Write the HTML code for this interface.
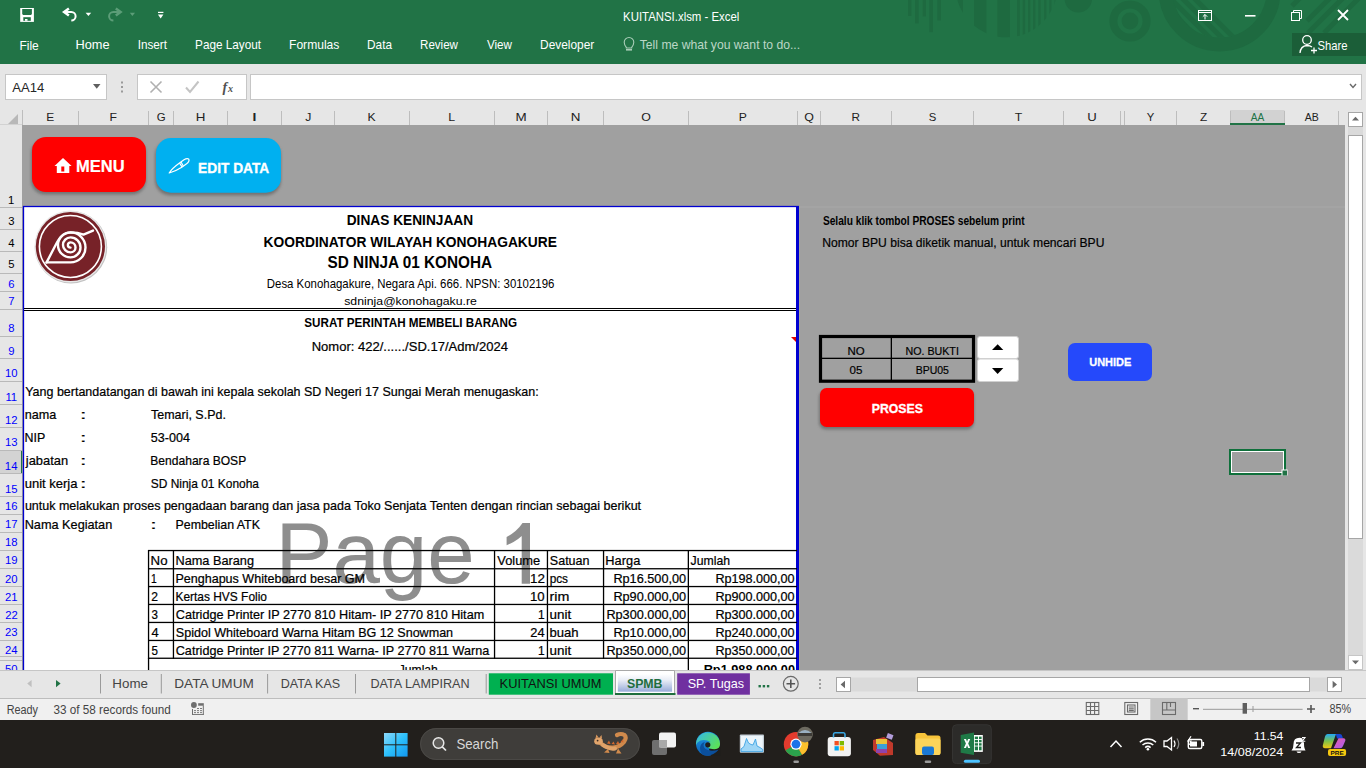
<!DOCTYPE html>
<html><head><meta charset="utf-8"><title>KUITANSI.xlsm - Excel</title>
<style>
html,body{margin:0;padding:0;width:1366px;height:768px;overflow:hidden;background:#e6e6e6;}
svg{display:block;font-family:"Liberation Sans",sans-serif;}
</style></head><body>
<svg width="1366" height="768" viewBox="0 0 1366 768">
<rect x="0" y="0" width="1366" height="64" fill="#217346"/><defs>
<clipPath id="semi"><circle cx="1006.5" cy="-13.7" r="51"/></clipPath>
<clipPath id="ringin"><circle cx="1219.6" cy="-10" r="47.5"/></clipPath>
<clipPath id="tb"><rect x="0" y="0" width="1366" height="64"/></clipPath>
</defs>
<g fill="#1e6a40" clip-path="url(#tb)">
<rect x="908" y="0" width="3.4" height="16"/><rect x="915" y="0" width="3.7" height="23.4"/><rect x="922.7" y="0" width="3.3" height="16.4"/>
<rect x="929.3" y="0" width="3.7" height="32.2"/><rect x="937.3" y="0" width="3.7" height="20.5"/>
<g clip-path="url(#semi)">
<path d="M955 0 L963 0 L963 15 Z"/>
<rect x="974" y="0" width="12.4" height="60"/><rect x="997.4" y="0" width="12.6" height="60"/>
<rect x="1017" y="0" width="2.8" height="60"/><rect x="1022.7" y="0" width="2.5" height="60"/><rect x="1028" y="0" width="2.3" height="60"/>
<rect x="1033" y="0" width="2.4" height="60"/><rect x="1038.3" y="0" width="2.3" height="60"/><rect x="1044.2" y="0" width="2.2" height="60"/>
<rect x="1049.3" y="0" width="2.2" height="60"/><rect x="1054.5" y="0" width="2.2" height="60"/>
</g>
<circle cx="1078.3" cy="-1.3" r="13.7"/>
<circle cx="1130" cy="21" r="8.4"/>
</g>
<g clip-path="url(#tb)">
<circle cx="1130" cy="21" r="16.6" fill="none" stroke="#1e6a40" stroke-width="8"/>
<circle cx="1219.6" cy="-9.6" r="54" fill="none" stroke="#1e6a40" stroke-width="14"/>
<g clip-path="url(#ringin)" stroke="#1e6a40" stroke-width="5">
<line x1="1150" y1="-10" x2="1215" y2="55"/><line x1="1162" y1="-10" x2="1227" y2="55"/>
<line x1="1174" y1="-10" x2="1239" y2="55"/><line x1="1186" y1="-10" x2="1251" y2="55"/>
</g>
<g stroke="#1e6a40" stroke-width="5">
<line x1="1292" y1="6" x2="1300" y2="-2"/><line x1="1307" y1="21" x2="1330" y2="-2"/>
<line x1="1308" y1="33" x2="1343" y2="-2"/><line x1="1324" y1="33" x2="1359" y2="-2"/>
</g>
</g>
<rect x="20.2" y="8" width="13.7" height="13.9" fill="#fff"/>
<path d="M22.2 9.1 H31.9 V14 L31 14.9 H23.1 L22.2 14 Z" fill="#217346"/>
<rect x="23.3" y="17.2" width="7.5" height="3.6" fill="#217346"/>
<rect x="25" y="19" width="2.5" height="1.8" fill="#fff"/>
<path d="M68.9 8.4 L64.1 11.95 L68.9 15.5" fill="none" stroke="#fff" stroke-width="2.5" stroke-linejoin="miter"/>
<path d="M65 11.95 H71.3 A4.3 4.25 0 0 1 71.3 20.45" fill="none" stroke="#fff" stroke-width="2"/>
<path d="M85.6 12.8 H91.2 L88.4 16 Z" fill="#fff"/>
<path d="M115.8 8.4 L120.6 11.95 L115.8 15.5" fill="none" stroke="#5c9d78" stroke-width="2.5"/>
<path d="M119.7 11.95 H113.4 A4.3 4.25 0 0 0 113.4 20.45" fill="none" stroke="#5c9d78" stroke-width="2"/>
<path d="M129.8 12.8 H135 L132.4 16 Z" fill="#5c9d78"/>
<rect x="158" y="11.8" width="5.4" height="1.2" fill="#fff"/>
<path d="M157.9 14.5 H163.4 L160.65 18.4 Z" fill="#fff"/>
<text x="623.09" y="21.00" font-size="13.00" fill="#fff" textLength="116.25" lengthAdjust="spacingAndGlyphs">KUITANSI.xlsm - Excel</text>
<g fill="none" stroke="#fff" stroke-width="1">
<rect x="1198.5" y="10.5" width="13" height="10"/>
<line x1="1198.5" y1="12.5" x2="1211.5" y2="12.5"/>
<path d="M1205 19.5 V14.5 M1202.8 16.7 L1205 14.5 L1207.2 16.7"/>
<rect x="1291.5" y="12.5" width="8" height="8"/>
<path d="M1293.5 12.5 V10.5 H1301.5 V18.5 H1299.5"/>
</g>
<rect x="1245" y="15" width="10.5" height="1.6" fill="#fff"/>
<path d="M1338 10 L1348 20 M1348 10 L1338 20" stroke="#fff" stroke-width="1.8"/>
<rect x="1292" y="33" width="74" height="23" fill="#1b5e38"/><g fill="none" stroke="#fff" stroke-width="1.3">
<circle cx="1307" cy="40" r="4.3"/>
<path d="M1300 53 Q1300.5 46 1307 45.5 Q1310 45.5 1312 47"/>
<path d="M1311 50.5 H1317 M1314 47.5 V53.5"/>
</g><text x="1317.49" y="49.50" font-size="13.00" fill="#fff" textLength="30.05" lengthAdjust="spacingAndGlyphs">Share</text>
<text x="19.44" y="50.20" font-size="13.20" fill="#fff" textLength="19.32" lengthAdjust="spacingAndGlyphs">File</text>
<text x="75.48" y="49.00" font-size="13.20" fill="#fff" textLength="34.13" lengthAdjust="spacingAndGlyphs">Home</text>
<text x="137.64" y="49.00" font-size="13.20" fill="#fff" textLength="29.33" lengthAdjust="spacingAndGlyphs">Insert</text>
<text x="195.06" y="49.00" font-size="13.20" fill="#fff" textLength="66.01" lengthAdjust="spacingAndGlyphs">Page Layout</text>
<text x="289.03" y="49.00" font-size="13.20" fill="#fff" textLength="50.36" lengthAdjust="spacingAndGlyphs">Formulas</text>
<text x="367.05" y="49.00" font-size="13.20" fill="#fff" textLength="24.97" lengthAdjust="spacingAndGlyphs">Data</text>
<text x="420.07" y="49.00" font-size="13.20" fill="#fff" textLength="37.91" lengthAdjust="spacingAndGlyphs">Review</text>
<text x="486.94" y="49.00" font-size="13.20" fill="#fff" textLength="25.05" lengthAdjust="spacingAndGlyphs">View</text>
<text x="540.05" y="49.00" font-size="13.20" fill="#fff" textLength="54.17" lengthAdjust="spacingAndGlyphs">Developer</text>
<g fill="none" stroke="#a9cdb8" stroke-width="1.1">
<path d="M626.3 47.3 Q624.2 44.8 624.2 42.3 A4.8 4.8 0 0 1 633.8 42.3 Q633.8 44.8 631.7 47.3 V48 H626.3 Z"/>
<line x1="626" y1="49.8" x2="632" y2="49.8" stroke-width="1.6"/>
</g><text x="639.76" y="49.00" font-size="13.20" fill="#bcd7c6" textLength="160.38" lengthAdjust="spacingAndGlyphs">Tell me what you want to do...</text>
<rect x="0" y="64" width="1366" height="46" fill="#e6e6e6"/><rect x="5.5" y="74.5" width="101" height="25" fill="#fff" stroke="#c6c6c6"/><text x="12.30" y="92.30" font-size="13.50" fill="#262626" textLength="32.01" lengthAdjust="spacingAndGlyphs">AA14</text>
<path d="M93 84 H100.5 L96.75 88.7 Z" fill="#5f5f5f"/><g fill="#9a9a9a"><rect x="121" y="81.5" width="2" height="2"/><rect x="121" y="86" width="2" height="2"/><rect x="121" y="90.5" width="2" height="2"/></g><rect x="137.5" y="74.5" width="109" height="25" fill="#fff" stroke="#c6c6c6"/><path d="M150.5 81.5 L161.5 92.5 M161.5 81.5 L150.5 92.5" stroke="#b0b0b0" stroke-width="1.6"/><path d="M186 87.5 L190 92 L198.5 81.5" fill="none" stroke="#c4c4c4" stroke-width="2"/><text x="222.5" y="92" font-family="Liberation Serif" font-style="italic" font-weight="bold" font-size="14" fill="#505050">f</text><text x="228" y="92" font-family="Liberation Serif" font-style="italic" font-weight="bold" font-size="10" fill="#505050">x</text><rect x="250.5" y="74.5" width="1111" height="25" fill="#fff" stroke="#c6c6c6"/><path d="M1350 84 L1353 87.5 L1356 84" fill="none" stroke="#6a6a6a" stroke-width="1.4"/><rect x="0" y="110" width="1366" height="15.5" fill="#e6e6e6"/><path d="M8 124 L18 124 L18 114 Z" fill="#b8b8b8"/><rect x="1230" y="110" width="54.5" height="15" fill="#d2d2d2"/><rect x="22" y="110" width="1" height="15" fill="#bdbdbd"/><rect x="78" y="111" width="1" height="14" fill="#bdbdbd"/><rect x="148" y="111" width="1" height="14" fill="#bdbdbd"/><rect x="173" y="111" width="1" height="14" fill="#bdbdbd"/><rect x="227" y="111" width="1" height="14" fill="#bdbdbd"/><rect x="281" y="111" width="1" height="14" fill="#bdbdbd"/><rect x="334" y="111" width="1" height="14" fill="#bdbdbd"/><rect x="409" y="111" width="1" height="14" fill="#bdbdbd"/><rect x="494" y="111" width="1" height="14" fill="#bdbdbd"/><rect x="547" y="111" width="1" height="14" fill="#bdbdbd"/><rect x="603" y="111" width="1" height="14" fill="#bdbdbd"/><rect x="688" y="111" width="1" height="14" fill="#bdbdbd"/><rect x="797" y="111" width="1" height="14" fill="#bdbdbd"/><rect x="820" y="111" width="1" height="14" fill="#bdbdbd"/><rect x="891" y="111" width="1" height="14" fill="#bdbdbd"/><rect x="973" y="111" width="1" height="14" fill="#bdbdbd"/><rect x="1063" y="111" width="1" height="14" fill="#bdbdbd"/><rect x="1120" y="111" width="1" height="14" fill="#bdbdbd"/><rect x="1124" y="111" width="1" height="14" fill="#bdbdbd"/><rect x="1176" y="111" width="1" height="14" fill="#bdbdbd"/><rect x="1230" y="111" width="1" height="14" fill="#bdbdbd"/><rect x="1284" y="111" width="1" height="14" fill="#bdbdbd"/><rect x="1338" y="111" width="1" height="14" fill="#bdbdbd"/><rect x="0" y="124.5" width="23" height="1" fill="#bdbdbd"/><rect x="1230" y="123" width="55" height="2" fill="#217346"/><text x="46.30" y="121.00" font-size="11.50" fill="#222" textLength="7.96" lengthAdjust="spacingAndGlyphs">E</text>
<text x="109.52" y="121.00" font-size="11.50" fill="#222" textLength="7.48" lengthAdjust="spacingAndGlyphs">F</text>
<text x="156.68" y="121.00" font-size="11.50" fill="#222" textLength="8.91" lengthAdjust="spacingAndGlyphs">G</text>
<text x="195.68" y="121.00" font-size="11.50" fill="#222" textLength="9.67" lengthAdjust="spacingAndGlyphs">H</text>
<text x="251.61" y="121.00" font-size="11.50" fill="#222" textLength="5.85" lengthAdjust="spacingAndGlyphs">I</text>
<text x="305.32" y="121.00" font-size="11.50" fill="#222" textLength="6.10" lengthAdjust="spacingAndGlyphs">J</text>
<text x="367.53" y="121.00" font-size="11.50" fill="#222" textLength="8.12" lengthAdjust="spacingAndGlyphs">K</text>
<text x="448.26" y="121.00" font-size="11.50" fill="#222" textLength="6.87" lengthAdjust="spacingAndGlyphs">L</text>
<text x="515.43" y="121.00" font-size="11.50" fill="#222" textLength="11.19" lengthAdjust="spacingAndGlyphs">M</text>
<text x="570.68" y="121.00" font-size="11.50" fill="#222" textLength="9.67" lengthAdjust="spacingAndGlyphs">N</text>
<text x="641.19" y="121.00" font-size="11.50" fill="#222" textLength="9.65" lengthAdjust="spacingAndGlyphs">O</text>
<text x="738.78" y="121.00" font-size="11.50" fill="#222" textLength="8.10" lengthAdjust="spacingAndGlyphs">P</text>
<text x="804.19" y="121.00" font-size="11.50" fill="#222" textLength="9.65" lengthAdjust="spacingAndGlyphs">Q</text>
<text x="851.56" y="121.00" font-size="11.50" fill="#222" textLength="8.50" lengthAdjust="spacingAndGlyphs">R</text>
<text x="928.74" y="121.00" font-size="11.50" fill="#222" textLength="7.54" lengthAdjust="spacingAndGlyphs">S</text>
<text x="1014.75" y="121.00" font-size="11.50" fill="#222" textLength="7.50" lengthAdjust="spacingAndGlyphs">T</text>
<text x="1087.26" y="121.00" font-size="11.50" fill="#222" textLength="9.50" lengthAdjust="spacingAndGlyphs">U</text>
<text x="1146.72" y="121.00" font-size="11.50" fill="#222" textLength="7.53" lengthAdjust="spacingAndGlyphs">Y</text>
<text x="1199.90" y="121.00" font-size="11.50" fill="#222" textLength="7.22" lengthAdjust="spacingAndGlyphs">Z</text>
<text x="1250.75" y="121.00" font-size="11.50" fill="#217346" textLength="13.54" lengthAdjust="spacingAndGlyphs">AA</text>
<text x="1304.75" y="121.00" font-size="11.50" fill="#222" textLength="14.07" lengthAdjust="spacingAndGlyphs">AB</text>
<rect x="0" y="125" width="22" height="545" fill="#e6e6e6"/><rect x="22" y="125" width="1323" height="545" fill="#a0a0a0"/><rect x="1345" y="110" width="21" height="560" fill="#e6e6e6"/><rect x="0" y="451" width="21" height="22" fill="#d3d3d3"/><rect x="21" y="451" width="1.6" height="22" fill="#217346"/><rect x="0" y="207" width="22" height="1" fill="#b9b9b9"/><rect x="0" y="229" width="22" height="1" fill="#b9b9b9"/><rect x="0" y="251" width="22" height="1" fill="#b9b9b9"/><rect x="0" y="273" width="22" height="1" fill="#b9b9b9"/><rect x="0" y="291" width="22" height="1" fill="#b9b9b9"/><rect x="0" y="309" width="22" height="1" fill="#b9b9b9"/><rect x="0" y="336" width="22" height="1" fill="#b9b9b9"/><rect x="0" y="358" width="22" height="1" fill="#b9b9b9"/><rect x="0" y="381" width="22" height="1" fill="#b9b9b9"/><rect x="0" y="404" width="22" height="1" fill="#b9b9b9"/><rect x="0" y="427" width="22" height="1" fill="#b9b9b9"/><rect x="0" y="450" width="22" height="1" fill="#b9b9b9"/><rect x="0" y="473" width="22" height="1" fill="#b9b9b9"/><rect x="0" y="496" width="22" height="1" fill="#b9b9b9"/><rect x="0" y="514" width="22" height="1" fill="#b9b9b9"/><rect x="0" y="532" width="22" height="1" fill="#b9b9b9"/><rect x="0" y="550" width="22" height="1" fill="#b9b9b9"/><rect x="0" y="568" width="22" height="1" fill="#b9b9b9"/><rect x="0" y="586" width="22" height="1" fill="#b9b9b9"/><rect x="0" y="604" width="22" height="1" fill="#b9b9b9"/><rect x="0" y="622" width="22" height="1" fill="#b9b9b9"/><rect x="0" y="640" width="22" height="1" fill="#b9b9b9"/><rect x="0" y="656" width="22" height="1" fill="#b9b9b9"/><rect x="0" y="676" width="22" height="1" fill="#b9b9b9"/><rect x="0" y="660" width="22" height="1" fill="#b9b9b9"/><rect x="22" y="125" width="1" height="545" fill="#a0a0a0"/><text x="8.09" y="203.50" font-size="11.30" fill="#000" textLength="6.28" lengthAdjust="spacingAndGlyphs">1</text>
<text x="8.26" y="225.00" font-size="11.30" fill="#000" textLength="6.28" lengthAdjust="spacingAndGlyphs">3</text>
<text x="8.32" y="246.80" font-size="11.30" fill="#000" textLength="6.28" lengthAdjust="spacingAndGlyphs">4</text>
<text x="8.26" y="268.20" font-size="11.30" fill="#000" textLength="6.28" lengthAdjust="spacingAndGlyphs">5</text>
<text x="8.21" y="288.10" font-size="11.30" fill="#0000ff" textLength="6.28" lengthAdjust="spacingAndGlyphs">6</text>
<text x="8.26" y="305.00" font-size="11.30" fill="#0000ff" textLength="6.28" lengthAdjust="spacingAndGlyphs">7</text>
<text x="8.24" y="331.60" font-size="11.30" fill="#0000ff" textLength="6.28" lengthAdjust="spacingAndGlyphs">8</text>
<text x="8.26" y="354.70" font-size="11.30" fill="#0000ff" textLength="6.28" lengthAdjust="spacingAndGlyphs">9</text>
<text x="4.90" y="376.60" font-size="11.30" fill="#0000ff" textLength="12.57" lengthAdjust="spacingAndGlyphs">10</text>
<text x="5.38" y="400.80" font-size="11.30" fill="#0000ff" textLength="11.73" lengthAdjust="spacingAndGlyphs">11</text>
<text x="4.99" y="423.50" font-size="11.30" fill="#0000ff" textLength="12.57" lengthAdjust="spacingAndGlyphs">12</text>
<text x="4.93" y="446.40" font-size="11.30" fill="#0000ff" textLength="12.57" lengthAdjust="spacingAndGlyphs">13</text>
<text x="4.87" y="469.90" font-size="11.30" fill="#0000ff" textLength="12.57" lengthAdjust="spacingAndGlyphs">14</text>
<text x="4.93" y="492.80" font-size="11.30" fill="#0000ff" textLength="12.57" lengthAdjust="spacingAndGlyphs">15</text>
<text x="4.93" y="510.40" font-size="11.30" fill="#0000ff" textLength="12.57" lengthAdjust="spacingAndGlyphs">16</text>
<text x="4.99" y="528.30" font-size="11.30" fill="#0000ff" textLength="12.57" lengthAdjust="spacingAndGlyphs">17</text>
<text x="4.93" y="546.20" font-size="11.30" fill="#0000ff" textLength="12.57" lengthAdjust="spacingAndGlyphs">18</text>
<text x="4.96" y="563.90" font-size="11.30" fill="#0000ff" textLength="12.57" lengthAdjust="spacingAndGlyphs">19</text>
<text x="5.04" y="582.90" font-size="11.30" fill="#0000ff" textLength="12.57" lengthAdjust="spacingAndGlyphs">20</text>
<text x="5.10" y="600.60" font-size="11.30" fill="#0000ff" textLength="12.57" lengthAdjust="spacingAndGlyphs">21</text>
<text x="5.13" y="618.50" font-size="11.30" fill="#0000ff" textLength="12.57" lengthAdjust="spacingAndGlyphs">22</text>
<text x="5.07" y="636.30" font-size="11.30" fill="#0000ff" textLength="12.57" lengthAdjust="spacingAndGlyphs">23</text>
<text x="5.02" y="654.20" font-size="11.30" fill="#0000ff" textLength="12.57" lengthAdjust="spacingAndGlyphs">24</text>
<text x="5.10" y="672.50" font-size="11.30" fill="#0000ff" textLength="12.57" lengthAdjust="spacingAndGlyphs">50</text>
<rect x="797" y="206.5" width="548" height="1" fill="#a8a8a8"/><rect x="23" y="207" width="774" height="463" fill="#fff"/><text x="275.47" y="582.60" font-size="86.30" fill="#8e8e8e" textLength="199.31" lengthAdjust="spacingAndGlyphs">Page</text>
<path d="M530 523 V583.7 H521.7 V536 Q518 539.5 513.5 542 Q509.5 544 506.6 545.2 V537 Q511.5 534.5 515.5 531 Q520 527 522.5 523 Z" fill="#8e8e8e"/><rect x="23" y="205.85" width="776" height="1.3" fill="#0000d0"/><rect x="22.85" y="206" width="1.3" height="464" fill="#0000d0"/><rect x="796" y="206" width="3" height="464" fill="#0000d0"/><rect x="799" y="206" width="1" height="464" fill="#a9a89c"/><rect x="24" y="308" width="772" height="1" fill="#000"/><rect x="24" y="310" width="772" height="1" fill="#000"/><g>
<circle cx="71" cy="247.2" r="36.2" fill="#9a9a9a" opacity="0.6"/>
<circle cx="70.4" cy="246.5" r="35.9" fill="#e8e8e8"/>
<circle cx="70.4" cy="246.5" r="34.6" fill="#772228"/>
<circle cx="70.4" cy="246.5" r="31" fill="none" stroke="#fff" stroke-width="1.6"/>
<g fill="none" stroke="#fff" stroke-width="2.4" stroke-linejoin="round" stroke-linecap="round">
<path d="M46.6 262.4 L70.5 262.4 A15 15 0 0 0 70.5 232.4 A12.5 12.5 0 0 0 70.5 257.4 A10 10 0 0 0 70.5 237.4 A7.5 7.5 0 0 0 70.5 252.4 A5 5 0 0 0 70.5 242.4 A2.6 2.6 0 0 0 70.5 247.6"/>
<path d="M46.6 262.4 Q53 250 57.5 241.5 Q62.5 232.8 70.5 232.4 Q78 232.4 83.5 234.6 L93 230.6"/>
</g>
</g><text x="346.71" y="225.00" font-size="14.30" font-weight="bold" fill="#000" textLength="126.43" lengthAdjust="spacingAndGlyphs">DINAS KENINJAAN</text>
<text x="263.60" y="246.90" font-size="14.60" font-weight="bold" fill="#000" textLength="293.33" lengthAdjust="spacingAndGlyphs">KOORDINATOR WILAYAH KONOHAGAKURE</text>
<text x="327.54" y="267.90" font-size="16.30" font-weight="bold" fill="#000" textLength="164.59" lengthAdjust="spacingAndGlyphs">SD NINJA 01 KONOHA</text>
<text x="266.79" y="288.30" font-size="12.20" fill="#000" textLength="287.57" lengthAdjust="spacingAndGlyphs">Desa Konohagakure, Negara Api. 666. NPSN: 30102196</text>
<text x="344.23" y="304.70" font-size="11.50" fill="#000" textLength="132.63" lengthAdjust="spacingAndGlyphs">sdninja@konohagaku.re</text>
<text x="304.25" y="327.20" font-size="13.50" font-weight="bold" fill="#000" textLength="212.76" lengthAdjust="spacingAndGlyphs">SURAT PERINTAH MEMBELI BARANG</text>
<text x="311.66" y="350.90" font-size="13.50" fill="#000" textLength="196.28" lengthAdjust="spacingAndGlyphs" stroke="#000" stroke-width="0.22">Nomor: 422/....../SD.17/Adm/2024</text>
<path d="M791 337 L796 337 L796 342 Z" fill="#e00000"/><text x="25.19" y="395.70" font-size="12.80" fill="#000" textLength="513.45" lengthAdjust="spacingAndGlyphs" stroke="#000" stroke-width="0.22">Yang bertandatangan di bawah ini kepala sekolah SD Negeri 17 Sungai Merah menugaskan:</text>
<text x="24.68" y="419.00" font-size="12.80" fill="#000" textLength="31.54" lengthAdjust="spacingAndGlyphs" stroke="#000" stroke-width="0.22">nama</text>
<text x="80.12" y="419.00" font-size="12.80" fill="#000" textLength="6.43" lengthAdjust="spacingAndGlyphs" stroke="#000" stroke-width="0.22">:</text>
<text x="151.05" y="419.00" font-size="12.80" fill="#000" textLength="74.80" lengthAdjust="spacingAndGlyphs" stroke="#000" stroke-width="0.22">Temari, S.Pd.</text>
<text x="24.50" y="442.00" font-size="12.80" fill="#000" textLength="20.74" lengthAdjust="spacingAndGlyphs" stroke="#000" stroke-width="0.22">NIP</text>
<text x="80.12" y="442.00" font-size="12.80" fill="#000" textLength="6.43" lengthAdjust="spacingAndGlyphs" stroke="#000" stroke-width="0.22">:</text>
<text x="150.80" y="442.00" font-size="12.80" fill="#000" textLength="39.17" lengthAdjust="spacingAndGlyphs" stroke="#000" stroke-width="0.22">53-004</text>
<text x="25.82" y="464.60" font-size="12.80" fill="#000" textLength="42.23" lengthAdjust="spacingAndGlyphs" stroke="#000" stroke-width="0.22">jabatan</text>
<text x="80.12" y="464.60" font-size="12.80" fill="#000" textLength="6.43" lengthAdjust="spacingAndGlyphs" stroke="#000" stroke-width="0.22">:</text>
<text x="150.34" y="464.60" font-size="12.80" fill="#000" textLength="95.87" lengthAdjust="spacingAndGlyphs" stroke="#000" stroke-width="0.22">Bendahara BOSP</text>
<text x="24.65" y="487.60" font-size="12.80" fill="#000" textLength="52.88" lengthAdjust="spacingAndGlyphs" stroke="#000" stroke-width="0.22">unit kerja</text>
<text x="80.12" y="487.60" font-size="12.80" fill="#000" textLength="6.43" lengthAdjust="spacingAndGlyphs" stroke="#000" stroke-width="0.22">:</text>
<text x="150.76" y="487.60" font-size="12.80" fill="#000" textLength="108.26" lengthAdjust="spacingAndGlyphs" stroke="#000" stroke-width="0.22">SD Ninja 01 Konoha</text>
<text x="24.89" y="510.40" font-size="12.80" fill="#000" textLength="616.22" lengthAdjust="spacingAndGlyphs" stroke="#000" stroke-width="0.22">untuk melakukan proses pengadaan barang dan jasa pada Toko Senjata Tenten dengan rincian sebagai berikut</text>
<text x="24.68" y="528.70" font-size="12.80" fill="#000" textLength="87.58" lengthAdjust="spacingAndGlyphs" stroke="#000" stroke-width="0.22">Nama Kegiatan</text>
<text x="150.22" y="528.70" font-size="12.80" fill="#000" textLength="6.43" lengthAdjust="spacingAndGlyphs" stroke="#000" stroke-width="0.22">:</text>
<text x="175.51" y="528.70" font-size="12.80" fill="#000" textLength="84.46" lengthAdjust="spacingAndGlyphs" stroke="#000" stroke-width="0.22">Pembelian ATK</text>
<rect x="148" y="549.9" width="649" height="1.3" fill="#000"/><rect x="148" y="568.1" width="649" height="1.3" fill="#000"/><rect x="148" y="585.9" width="649" height="1.3" fill="#000"/><rect x="148" y="603.8" width="649" height="1.3" fill="#000"/><rect x="148" y="621.8" width="649" height="1.3" fill="#000"/><rect x="148" y="639.8" width="649" height="1.3" fill="#000"/><rect x="148" y="657.6" width="649" height="1.3" fill="#000"/><rect x="147.9" y="550" width="1.3" height="108.8" fill="#000"/><rect x="172.8" y="550" width="1.3" height="108.8" fill="#000"/><rect x="493.9" y="550" width="1.3" height="108.8" fill="#000"/><rect x="546.8" y="550" width="1.3" height="108.8" fill="#000"/><rect x="602.9" y="550" width="1.3" height="108.8" fill="#000"/><rect x="687.7" y="550" width="1.3" height="108.8" fill="#000"/><rect x="147.9" y="658" width="1.3" height="12" fill="#000"/><rect x="687.7" y="658" width="1.3" height="12" fill="#000"/><text x="150.64" y="564.60" font-size="12.80" fill="#000" textLength="16.93" lengthAdjust="spacingAndGlyphs" stroke="#000" stroke-width="0.22">No</text>
<text x="175.48" y="564.60" font-size="12.80" fill="#000" textLength="78.55" lengthAdjust="spacingAndGlyphs" stroke="#000" stroke-width="0.22">Nama Barang</text>
<text x="497.34" y="564.60" font-size="12.80" fill="#000" textLength="42.85" lengthAdjust="spacingAndGlyphs" stroke="#000" stroke-width="0.22">Volume</text>
<text x="549.84" y="564.60" font-size="12.80" fill="#000" textLength="39.67" lengthAdjust="spacingAndGlyphs" stroke="#000" stroke-width="0.22">Satuan</text>
<text x="605.37" y="564.60" font-size="12.80" fill="#000" textLength="34.91" lengthAdjust="spacingAndGlyphs" stroke="#000" stroke-width="0.22">Harga</text>
<text x="690.62" y="564.60" font-size="12.80" fill="#000" textLength="39.46" lengthAdjust="spacingAndGlyphs" stroke="#000" stroke-width="0.22">Jumlah</text>
<text x="151.12" y="582.70" font-size="12.80" fill="#000" textLength="5.75" lengthAdjust="spacingAndGlyphs" stroke="#000" stroke-width="0.22">1</text>
<text x="175.40" y="582.70" font-size="12.80" fill="#000" textLength="189.67" lengthAdjust="spacingAndGlyphs" stroke="#000" stroke-width="0.22">Penghapus Whiteboard besar GM</text>
<text x="529.99" y="582.70" font-size="12.80" fill="#000" textLength="14.91" lengthAdjust="spacingAndGlyphs" stroke="#000" stroke-width="0.22">12</text>
<text x="549.63" y="582.70" font-size="12.80" fill="#000" textLength="18.40" lengthAdjust="spacingAndGlyphs" stroke="#000" stroke-width="0.22">pcs</text>
<text x="613.38" y="582.70" font-size="12.80" fill="#000" textLength="72.79" lengthAdjust="spacingAndGlyphs" stroke="#000" stroke-width="0.22">Rp16.500,00</text>
<text x="715.39" y="582.70" font-size="12.80" fill="#000" textLength="79.19" lengthAdjust="spacingAndGlyphs" stroke="#000" stroke-width="0.22">Rp198.000,00</text>
<text x="151.30" y="600.70" font-size="12.80" fill="#000" textLength="6.72" lengthAdjust="spacingAndGlyphs" stroke="#000" stroke-width="0.22">2</text>
<text x="175.45" y="600.70" font-size="12.80" fill="#000" textLength="91.53" lengthAdjust="spacingAndGlyphs" stroke="#000" stroke-width="0.22">Kertas HVS Folio</text>
<text x="530.01" y="600.70" font-size="12.80" fill="#000" textLength="14.68" lengthAdjust="spacingAndGlyphs" stroke="#000" stroke-width="0.22">10</text>
<text x="549.47" y="600.70" font-size="12.80" fill="#000" textLength="19.83" lengthAdjust="spacingAndGlyphs" stroke="#000" stroke-width="0.22">rim</text>
<text x="613.38" y="600.70" font-size="12.80" fill="#000" textLength="72.79" lengthAdjust="spacingAndGlyphs" stroke="#000" stroke-width="0.22">Rp90.000,00</text>
<text x="715.39" y="600.70" font-size="12.80" fill="#000" textLength="79.19" lengthAdjust="spacingAndGlyphs" stroke="#000" stroke-width="0.22">Rp900.000,00</text>
<text x="151.44" y="618.60" font-size="12.80" fill="#000" textLength="6.44" lengthAdjust="spacingAndGlyphs" stroke="#000" stroke-width="0.22">3</text>
<text x="175.77" y="618.60" font-size="12.80" fill="#000" textLength="308.41" lengthAdjust="spacingAndGlyphs" stroke="#000" stroke-width="0.22">Catridge Printer IP 2770 810 Hitam- IP 2770 810 Hitam</text>
<text x="538.10" y="618.60" font-size="12.80" fill="#000" textLength="6.65" lengthAdjust="spacingAndGlyphs" stroke="#000" stroke-width="0.22">1</text>
<text x="549.53" y="618.60" font-size="12.80" fill="#000" textLength="21.67" lengthAdjust="spacingAndGlyphs" stroke="#000" stroke-width="0.22">unit</text>
<text x="606.38" y="618.60" font-size="12.80" fill="#000" textLength="79.80" lengthAdjust="spacingAndGlyphs" stroke="#000" stroke-width="0.22">Rp300.000,00</text>
<text x="715.39" y="618.60" font-size="12.80" fill="#000" textLength="79.19" lengthAdjust="spacingAndGlyphs" stroke="#000" stroke-width="0.22">Rp300.000,00</text>
<text x="151.64" y="636.60" font-size="12.80" fill="#000" textLength="7.16" lengthAdjust="spacingAndGlyphs" stroke="#000" stroke-width="0.22">4</text>
<text x="175.84" y="636.60" font-size="12.80" fill="#000" textLength="277.28" lengthAdjust="spacingAndGlyphs" stroke="#000" stroke-width="0.22">Spidol Whiteboard Warna Hitam BG 12 Snowman</text>
<text x="530.36" y="636.60" font-size="12.80" fill="#000" textLength="14.26" lengthAdjust="spacingAndGlyphs" stroke="#000" stroke-width="0.22">24</text>
<text x="549.55" y="636.60" font-size="12.80" fill="#000" textLength="29.10" lengthAdjust="spacingAndGlyphs" stroke="#000" stroke-width="0.22">buah</text>
<text x="613.38" y="636.60" font-size="12.80" fill="#000" textLength="72.79" lengthAdjust="spacingAndGlyphs" stroke="#000" stroke-width="0.22">Rp10.000,00</text>
<text x="715.39" y="636.60" font-size="12.80" fill="#000" textLength="79.19" lengthAdjust="spacingAndGlyphs" stroke="#000" stroke-width="0.22">Rp240.000,00</text>
<text x="151.44" y="654.60" font-size="12.80" fill="#000" textLength="6.44" lengthAdjust="spacingAndGlyphs" stroke="#000" stroke-width="0.22">5</text>
<text x="175.77" y="654.60" font-size="12.80" fill="#000" textLength="313.45" lengthAdjust="spacingAndGlyphs" stroke="#000" stroke-width="0.22">Catridge Printer IP 2770 811 Warna- IP 2770 811 Warna</text>
<text x="538.10" y="654.60" font-size="12.80" fill="#000" textLength="6.65" lengthAdjust="spacingAndGlyphs" stroke="#000" stroke-width="0.22">1</text>
<text x="549.53" y="654.60" font-size="12.80" fill="#000" textLength="21.67" lengthAdjust="spacingAndGlyphs" stroke="#000" stroke-width="0.22">unit</text>
<text x="606.38" y="654.60" font-size="12.80" fill="#000" textLength="79.80" lengthAdjust="spacingAndGlyphs" stroke="#000" stroke-width="0.22">Rp350.000,00</text>
<text x="715.39" y="654.60" font-size="12.80" fill="#000" textLength="79.19" lengthAdjust="spacingAndGlyphs" stroke="#000" stroke-width="0.22">Rp350.000,00</text>
<text x="703.67" y="673.60" font-size="12.80" font-weight="bold" fill="#000" textLength="91.36" lengthAdjust="spacingAndGlyphs">Rp1.988.000,00</text>
<text x="398.82" y="673.60" font-size="12.80" fill="#000" textLength="38.95" lengthAdjust="spacingAndGlyphs" stroke="#000" stroke-width="0.22">Jumlah</text>
<text x="822.89" y="225.00" font-size="12.00" font-weight="bold" fill="#000" textLength="201.73" lengthAdjust="spacingAndGlyphs">Selalu klik tombol PROSES sebelum print</text>
<text x="822.23" y="247.00" font-size="12.50" fill="#000" textLength="282.21" lengthAdjust="spacingAndGlyphs" stroke="#000" stroke-width="0.2">Nomor BPU bisa diketik manual, untuk mencari BPU</text>
<rect x="820.5" y="336.5" width="153" height="44.7" fill="none" stroke="#000" stroke-width="3.2"/><rect x="890.7" y="336" width="1.3" height="46" fill="#000"/><rect x="820" y="357.7" width="154" height="1.3" fill="#000"/><text x="847.38" y="355.10" font-size="11.50" fill="#000" textLength="17.19" lengthAdjust="spacingAndGlyphs" stroke="#000" stroke-width="0.2">NO</text>
<text x="905.45" y="355.10" font-size="11.50" fill="#000" textLength="53.42" lengthAdjust="spacingAndGlyphs" stroke="#000" stroke-width="0.2">NO. BUKTI</text>
<text x="849.54" y="373.60" font-size="11.50" fill="#000" textLength="12.85" lengthAdjust="spacingAndGlyphs" stroke="#000" stroke-width="0.2">05</text>
<text x="915.76" y="373.60" font-size="11.50" fill="#000" textLength="33.19" lengthAdjust="spacingAndGlyphs" stroke="#000" stroke-width="0.2">BPU05</text>
<rect x="977.5" y="336.5" width="41" height="22" rx="2.5" fill="#fff" stroke="#d0d0d0"/><rect x="977.5" y="359" width="41" height="22.5" rx="2.5" fill="#fff" stroke="#d0d0d0"/><path d="M992 350 H1003.3 L997.65 344.3 Z" fill="#000"/><path d="M992 368 H1003.3 L997.65 374 Z" fill="#000"/><defs><filter id="sh" x="-20%" y="-20%" width="140%" height="150%"><feGaussianBlur stdDeviation="1.6"/></filter></defs><rect x="819" y="390.5" width="155" height="39" rx="7" fill="#505050" opacity="0.55" filter="url(#sh)"/><rect x="820" y="388" width="154" height="39" rx="6.5" fill="#ff0000"/><text x="871.70" y="412.80" font-size="13.70" font-weight="bold" fill="#fff" textLength="51.17" lengthAdjust="spacingAndGlyphs" stroke="#fff" stroke-width="0.35">PROSES</text>
<rect x="1068" y="343" width="84" height="38" rx="7" fill="#2549fb"/><text x="1089.24" y="366.10" font-size="11.80" font-weight="bold" fill="#fff" textLength="42.18" lengthAdjust="spacingAndGlyphs" stroke="#fff" stroke-width="0.3">UNHIDE</text>
<rect x="31" y="139.5" width="115" height="55" rx="14" fill="#505050" opacity="0.55" filter="url(#sh)"/><rect x="32" y="137" width="114" height="55" rx="14" fill="#ff0000"/><path d="M54.5 166 L63 158 L71.6 166 H69.3 V173 H56.8 V166 Z" fill="#fff"/><rect x="61.3" y="166.5" width="3" height="5" fill="#ff0000"/><text x="76.03" y="171.90" font-size="16.00" font-weight="bold" fill="#fff" textLength="48.53" lengthAdjust="spacingAndGlyphs" stroke="#fff" stroke-width="0.2">MENU</text>
<rect x="155" y="140.5" width="126" height="55" rx="15" fill="#505050" opacity="0.55" filter="url(#sh)"/><rect x="156" y="138" width="125" height="54.7" rx="15" fill="#00b0f0"/><g fill="none" stroke="#fff" stroke-width="1.2" stroke-linejoin="round"><path d="M169.2 173 Q171.5 168.8 179.5 163 L184 159.8 Q187.3 157.6 188.8 159.2 Q189.8 161.3 186.6 163.8 L181.8 167.2 Q175 171.5 169.2 173 Z"/><path d="M179.6 163.1 L182 166.9 M181 162 L183.3 166"/></g><text x="198.11" y="172.80" font-size="13.80" font-weight="bold" fill="#fff" textLength="71.13" lengthAdjust="spacingAndGlyphs" stroke="#fff" stroke-width="0.3">EDIT DATA</text>
<rect x="1230" y="450" width="55" height="24" fill="none" stroke="#0f703b" stroke-width="2"/><rect x="1231.5" y="451.5" width="52" height="21" fill="none" stroke="#fff" stroke-width="1"/><rect x="1281.5" y="469.5" width="6" height="6" fill="#fff"/><rect x="1282.5" y="470.5" width="4.5" height="5" fill="#217346"/><rect x="1348.5" y="112.5" width="14" height="14" fill="#fff" stroke="#a6a6a6"/><path d="M1352 120.5 H1359 L1355.5 116.8 Z" fill="#6a6a6a"/><rect x="1348" y="127" width="15" height="528" fill="#dadada"/><rect x="1348.5" y="135.5" width="14" height="403" fill="#fff" stroke="#a6a6a6"/><rect x="1348.5" y="655.5" width="14" height="14" fill="#fff" stroke="#c6c6c6"/><path d="M1352 660.5 H1359 L1355.5 664.2 Z" fill="#6a6a6a"/><rect x="0" y="670" width="1366" height="28" fill="#e6e6e6"/><rect x="0" y="670" width="1366" height="1" fill="#c6c6c6"/><path d="M31.6 680 V687.2 L27.2 683.6 Z" fill="#c0c0c0"/><path d="M56 680 V687.2 L60.6 683.6 Z" fill="#217346"/><rect x="100.0" y="674" width="1" height="19.5" fill="#9a9a9a"/><rect x="160.8" y="674" width="1" height="19.5" fill="#9a9a9a"/><rect x="267.1" y="674" width="1" height="19.5" fill="#9a9a9a"/><rect x="355.0" y="674" width="1" height="19.5" fill="#9a9a9a"/><rect x="485.7" y="674" width="1" height="19.5" fill="#9a9a9a"/><text x="112.33" y="687.90" font-size="13.00" fill="#444" textLength="35.60" lengthAdjust="spacingAndGlyphs">Home</text>
<text x="174.31" y="687.90" font-size="13.00" fill="#444" textLength="79.50" lengthAdjust="spacingAndGlyphs">DATA UMUM</text>
<text x="280.70" y="687.90" font-size="13.00" fill="#444" textLength="59.50" lengthAdjust="spacingAndGlyphs">DATA KAS</text>
<text x="370.49" y="687.90" font-size="13.00" fill="#444" textLength="99.07" lengthAdjust="spacingAndGlyphs">DATA LAMPIRAN</text>
<rect x="488.8" y="673.3" width="124.2" height="21.4" fill="#00b050"/><text x="499.57" y="687.90" font-size="13.00" fill="#111" textLength="101.87" lengthAdjust="spacingAndGlyphs">KUITANSI UMUM</text>
<defs><linearGradient id="spg" x1="0" y1="0" x2="0" y2="1"><stop offset="0" stop-color="#ffffff"/><stop offset="0.35" stop-color="#e9edf6"/><stop offset="1" stop-color="#98acd9"/></linearGradient></defs><path d="M615.5 694 V670.5 H674.5 V694" fill="#fff" stroke="#a8a8a8" stroke-width="1"/><rect x="617.8" y="673.9" width="54.3" height="17.8" fill="url(#spg)"/><rect x="615" y="693" width="60.5" height="2" fill="#1e6e3c"/><text x="626.93" y="687.70" font-size="13.50" font-weight="bold" fill="#1f6e40" textLength="35.58" lengthAdjust="spacingAndGlyphs">SPMB</text>
<rect x="677.2" y="673.3" width="72.7" height="21.4" fill="#7030a0"/><text x="687.73" y="687.90" font-size="13.00" fill="#fff" textLength="56.41" lengthAdjust="spacingAndGlyphs">SP. Tugas</text>
<g fill="#217346"><rect x="758.5" y="685" width="2.4" height="2.4"/><rect x="762.7" y="685" width="2.4" height="2.4"/><rect x="766.9" y="685" width="2.4" height="2.4"/></g><circle cx="790.8" cy="683.8" r="7.4" fill="none" stroke="#6a6a6a" stroke-width="1.2"/><path d="M786.5 683.8 H795.1 M790.8 679.5 V688.1" stroke="#555" stroke-width="1.6"/><g fill="#a0a0a0"><rect x="819" y="679" width="2" height="2"/><rect x="819" y="683" width="2" height="2"/><rect x="819" y="687" width="2" height="2"/></g><rect x="836.5" y="677.5" width="14" height="14" fill="#fff" stroke="#a6a6a6"/><path d="M845 680.8 V688.2 L840.6 684.5 Z" fill="#6a6a6a"/><rect x="851" y="677.5" width="476" height="14" fill="#dadada"/><rect x="917.5" y="677.5" width="392" height="14" fill="#fff" stroke="#a6a6a6"/><rect x="1327.5" y="677.5" width="14" height="14" fill="#fff" stroke="#a6a6a6"/><path d="M1332.6 680.8 V688.2 L1337 684.5 Z" fill="#6a6a6a"/><rect x="0" y="698" width="1366" height="22" fill="#f0f0f0"/><rect x="0" y="698" width="1366" height="1" fill="#bdbdbd"/><text x="6.63" y="713.50" font-size="12.00" fill="#444" textLength="31.38" lengthAdjust="spacingAndGlyphs">Ready</text>
<text x="53.53" y="713.50" font-size="12.00" fill="#444" textLength="117.25" lengthAdjust="spacingAndGlyphs">33 of 58 records found</text>
<g fill="#6e6e6e"><circle cx="193.9" cy="705" r="2.9"/><rect x="198.2" y="703.2" width="5.6" height="2.5"/>
<rect x="202.8" y="705.5" width="1" height="9.3"/><rect x="192" y="709" width="1" height="5.8"/><rect x="192" y="714" width="11.8" height="0.9"/>
<rect x="197" y="708.1" width="2" height="0.9"/><rect x="200" y="708.1" width="2" height="0.9"/>
<rect x="194" y="710.2" width="2" height="0.9"/><rect x="197" y="710.2" width="2" height="0.9"/><rect x="200" y="710.2" width="2" height="0.9"/>
<rect x="194" y="712.2" width="2" height="0.9"/><rect x="197" y="712.2" width="2" height="0.9"/><rect x="200" y="712.2" width="2" height="0.9"/></g><g fill="none" stroke="#6a6a6a" stroke-width="1.1"><rect x="1086.3" y="702.5" width="12.5" height="12"/><path d="M1090.5 702.5 V714.5 M1094.6 702.5 V714.5 M1086.3 706.5 H1098.8 M1086.3 710.5 H1098.8"/><rect x="1124.8" y="702.5" width="12.8" height="12"/><rect x="1127.5" y="705" width="7.5" height="7"/><path d="M1128.8 707 H1133.8 M1128.8 708.7 H1133.8 M1128.8 710.4 H1133.8"/></g><rect x="1150.3" y="698" width="37.4" height="22" fill="#c6c6c6"/><g fill="none" stroke="#6a6a6a" stroke-width="1.1"><rect x="1162.5" y="702.5" width="13" height="12"/><path d="M1162.5 710 H1175.5 M1166.8 702.5 V710 M1170.5 702.5 V707"/></g><rect x="1193" y="708" width="6" height="1.4" fill="#555"/><rect x="1203" y="708.8" width="99.6" height="1" fill="#9a9a9a"/><rect x="1242.6" y="703" width="4.4" height="10.7" fill="#5f5f5f"/><rect x="1252.5" y="706" width="1" height="6" fill="#9a9a9a"/><path d="M1307 709 H1315 M1311 705 V713" stroke="#555" stroke-width="1.6"/><text x="1329.51" y="713.00" font-size="12.00" fill="#444" textLength="21.68" lengthAdjust="spacingAndGlyphs">85%</text>
<rect x="0" y="720" width="1366" height="48" fill="#221f1c"/><defs><linearGradient id="wg" gradientUnits="userSpaceOnUse" x1="384" y1="733" x2="407.6" y2="756.6"><stop offset="0" stop-color="#8ed8fb"/><stop offset="0.5" stop-color="#2cc0fb"/><stop offset="1" stop-color="#1297f0"/></linearGradient></defs>
<g fill="url(#wg)"><rect x="384" y="733" width="11.3" height="11.3"/><rect x="396.3" y="733" width="11.3" height="11.3"/><rect x="384" y="745.3" width="11.3" height="11.3"/><rect x="396.3" y="745.3" width="11.3" height="11.3"/></g><rect x="420" y="728" width="220" height="32" rx="16" fill="#3f3d3a"/><rect x="420.5" y="728.5" width="219" height="31" rx="15.5" fill="none" stroke="#4a4845" stroke-width="1"/><circle cx="438.5" cy="743" r="5.3" fill="#5e5c59" stroke="#e8e8e8" stroke-width="1.5"/><path d="M442.3 746.8 L446 750.5" stroke="#e8e8e8" stroke-width="1.7"/><text x="456.40" y="749.30" font-size="14.20" fill="#d8d8d8" textLength="42.01" lengthAdjust="spacingAndGlyphs">Search</text>
<g>
<path d="M601 743.5 Q606 748 613 747.5 Q620 747 624 742 Q627 737.5 624.5 735 Q621 733 617 735" fill="none" stroke="#d08a4c" stroke-width="4.2" stroke-linecap="round"/>
<path d="M603 745 Q609 749.5 615 748.5" fill="none" stroke="#e0a36a" stroke-width="4" stroke-linecap="round"/>
<ellipse cx="598.5" cy="741.2" rx="4.3" ry="3.6" fill="#e2a56c"/>
<path d="M595.5 738 L596.5 734.5 L598.5 737.5 Z M599.5 737.5 L601.5 735 L602 738.5 Z" fill="#d9985e"/>
<circle cx="597.6" cy="740.6" r="0.9" fill="#3a2a20"/>
<path d="M604 752.5 L608 749 L609.5 753 Z M616 753.5 L618 748.5 L621.5 753.5 Z" fill="#d08a4c"/>
<path d="M607 743.5 L609 740.5 L610.5 744 Z M611.5 744 L613.5 741.5 L615 744.5 Z M616 744 L618 741 L619.5 744 Z M620.5 742 L623 739 L623.5 742.5 Z" fill="#d2692e"/>
</g><rect x="652" y="740" width="15" height="15" rx="2" fill="#6f6f6f"/><rect x="659" y="732.5" width="17" height="15" rx="2" fill="#f2f2f2"/><rect x="659" y="740" width="8" height="7.5" fill="#a9a9a9"/><defs><linearGradient id="eg1" x1="0" y1="0" x2="0" y2="1"><stop offset="0" stop-color="#1e9be6"/><stop offset="1" stop-color="#0c5fb5"/></linearGradient>
<linearGradient id="eg2" x1="0" y1="0" x2="1" y2="0.6"><stop offset="0" stop-color="#33b8ee"/><stop offset="1" stop-color="#5be05a"/></linearGradient></defs>
<circle cx="708" cy="743.8" r="12" fill="url(#eg1)"/>
<path d="M720.3 744.5 L720.3 756 L711 756 L709 749 Z" fill="#1f1e1c"/>
<path d="M718.5 749.8 Q714 755.5 707 755.8 Q700 755.5 700 748 Q700.5 743 704.8 742 Q702 746 705.5 749 Q710 752 718.5 749.8 Z" fill="#0b4f9c"/>
<path d="M696 745 A12 12 0 0 1 720 743.8 Q720.3 749.2 714.5 749.2 Q709 749.2 707.6 746.5 Q707 742.5 710.5 742 Q705 738.8 700 740.8 Q696.5 742.5 696 745 Z" fill="url(#eg2)"/>
<circle cx="707.8" cy="744.8" r="2.6" fill="#1f1e1c"/>
<rect x="739.8" y="734.6" width="24.2" height="18.2" rx="1" fill="#c3ced6"/><rect x="741" y="735.8" width="21.8" height="15.8" fill="#eef6fb"/><path d="M741 749 L744 746.5 L746.5 738.5 L748.5 743 L751 744.5 L753 745 L755.5 739 L757 746 L760 747.5 L762.8 749.5 V751.6 H741 Z" fill="#9fd6f6" stroke="#3ea3e3" stroke-width="0.9"/><circle cx="796" cy="744.2" r="12.2" fill="#e33b2e"/>
<path d="M796 744.2 L785.5 750.3 A12.2 12.2 0 0 0 802.1 754.8 Z" fill="#2ba24c"/>
<path d="M796 744.2 L802.1 754.8 A12.2 12.2 0 0 0 806.6 738.1 Z" fill="#fbc02d"/>
<circle cx="796" cy="744.2" r="5.6" fill="#fff"/><circle cx="796" cy="744.2" r="4.4" fill="#1a73e8"/>
<circle cx="805" cy="734.6" r="7.8" fill="#6d6a60"/><rect x="798" y="733" width="14" height="3" fill="#3c3a36"/><path d="M798.5 733 Q805 727 811.5 733" fill="#9ab0c2"/><rect x="793.4" y="760.5" width="5.6" height="2.5" rx="1.2" fill="#9a9a9a"/><rect x="827.7" y="737" width="23.2" height="19.3" rx="3" fill="#f2f2f2"/>
<path d="M833.5 737.5 V734.5 Q833.5 732.8 835 732.8 H843.5 Q845 732.8 845 734.5 V737.5" fill="none" stroke="#39a7e3" stroke-width="1.6"/>
<rect x="834.5" y="741" width="4.3" height="4.3" fill="#f25022"/><rect x="839.7" y="741" width="4.3" height="4.3" fill="#7fba00"/>
<rect x="834.5" y="746.2" width="4.3" height="4.3" fill="#00a4ef"/><rect x="839.7" y="746.2" width="4.3" height="4.3" fill="#ffb900"/><path d="M873 740 L884 737 L893 743 L893 755 L880 755.7 L873 750 Z" fill="#c0392b"/>
<rect x="876" y="739" width="11" height="5" fill="#e8c23a"/><rect x="877" y="744" width="10" height="5" fill="#3aa0d8"/><rect x="876" y="749" width="11" height="4" fill="#8e44ad"/>
<rect x="887" y="734" width="6" height="5" fill="#b39ddb" transform="rotate(20 890 736)"/><path d="M915.4 736 Q915.4 733 918 733 H925 L927.5 735.5 H938 Q940.5 735.5 940.5 738 V752.5 Q940.5 755 938 755 H918 Q915.4 755 915.4 752.5 Z" fill="#f8c43a"/>
<rect x="915.4" y="738.5" width="25.1" height="16.5" rx="2" fill="#fcd45a"/>
<rect x="922" y="746.5" width="12" height="8.5" rx="2" fill="#1a78d4"/><rect x="924.7" y="760.5" width="6.5" height="2.5" rx="1.2" fill="#9a9a9a"/><rect x="952.5" y="724.8" width="38.8" height="38.8" rx="4" fill="#2c2b29" stroke="#353432" stroke-width="1"/><rect x="973.5" y="735" width="9.3" height="16.9" fill="#fff"/>
<g fill="#1e7a46"><rect x="974.8" y="736.6" width="3.2" height="2.4"/><rect x="979" y="736.6" width="2.6" height="2.4"/>
<rect x="974.8" y="739.9" width="3.2" height="2.4"/><rect x="979" y="739.9" width="2.6" height="2.4"/>
<rect x="974.8" y="743.2" width="3.2" height="2.4"/><rect x="979" y="743.2" width="2.6" height="2.4"/>
<rect x="974.8" y="746.5" width="3.2" height="3.8"/><rect x="979" y="746.5" width="2.6" height="3.8"/></g>
<path d="M960.7 735 L974 732.5 V754.9 L960.7 752.7 Z" fill="#1f7a47"/>
<path d="M963.9 739 H966 L967.05 741.8 L968.1 739 H970.2 L968.2 743.5 L970.2 748 H968.1 L967.05 745.2 L966 748 H963.9 L965.9 743.5 Z" fill="#fff"/><rect x="963.9" y="759.8" width="16.1" height="3" rx="1.5" fill="#4cc2ff"/><path d="M1110.5 747 L1116 741 L1121.5 747" fill="none" stroke="#fff" stroke-width="1.5"/><g fill="none" stroke="#fff" stroke-width="1.5">
<path d="M1139.8 742.2 A12 12 0 0 1 1156 742.2"/><path d="M1142.5 745 A8 8 0 0 1 1153.3 745"/><path d="M1145.2 747.6 A4 4 0 0 1 1150.6 747.6"/></g>
<circle cx="1147.9" cy="749.3" r="1.3" fill="#fff"/><path d="M1164 741 H1167 L1171.5 737.5 V750 L1167 746.5 H1164 Z" fill="none" stroke="#fff" stroke-width="1.3"/>
<path d="M1174 740.5 Q1176 743.7 1174 747" fill="none" stroke="#fff" stroke-width="1.2"/>
<path d="M1177 738.5 Q1180.5 743.7 1177 749" fill="none" stroke="#8a8a8a" stroke-width="1.2"/><rect x="1188.3" y="739.5" width="13.5" height="9" rx="1.5" fill="none" stroke="#fff" stroke-width="1.4"/>
<rect x="1202.3" y="742" width="1.8" height="4" fill="#fff"/>
<rect x="1190" y="741.5" width="7" height="5" fill="#fff"/>
<path d="M1191 736.2 L1188 741 L1191 741 L1189.5 745" fill="none" stroke="#fff" stroke-width="1.2"/><text x="1253.79" y="740.20" font-size="11.80" fill="#fff" textLength="29.62" lengthAdjust="spacingAndGlyphs">11.54</text>
<text x="1220.36" y="756.00" font-size="11.80" fill="#fff" textLength="63.02" lengthAdjust="spacingAndGlyphs">14/08/2024</text>
<path d="M1291.5 750.5 Q1293.5 748.5 1293.5 744 Q1293.5 737.8 1299.5 737.8 Q1301.5 737.8 1302.5 738.6 L1302.5 742.2 L1304 742.2 Q1304 746 1304.2 747 Q1304.8 749 1305.5 750.5 Z" fill="#fff"/>
<path d="M1296.5 751.5 H1301.5 Q1301 753 1299 753 Q1297 753 1296.5 751.5 Z" fill="#fff"/>
<path d="M1296 743 H1300.5 L1296.5 747.5 H1301" fill="none" stroke="#1f1e1c" stroke-width="1.3"/>
<path d="M1302 737.5 H1305 L1302 741.3 H1305.3" fill="none" stroke="#fff" stroke-width="1.1"/>
<defs><linearGradient id="cpl" x1="0" y1="0" x2="0" y2="1"><stop offset="0" stop-color="#22a8f5"/><stop offset="0.5" stop-color="#7cc24a"/><stop offset="1" stop-color="#f2c712"/></linearGradient>
<linearGradient id="cpr" x1="0" y1="0" x2="1" y2="1"><stop offset="0" stop-color="#e85aa8"/><stop offset="1" stop-color="#a95ef0"/></linearGradient></defs>
<path d="M1327.5 734 H1336 L1331 748.3 H1325 Q1322.5 748.3 1322.8 745.5 L1325 736.5 Q1325.6 734 1327.5 734 Z" fill="url(#cpl)"/>
<path d="M1335.8 734 H1339.8 Q1341.8 734 1342.3 736.2 L1343 738.5 H1337 Z" fill="#1746d6"/>
<path d="M1338.5 738.2 H1343.5 Q1345.8 738.2 1345.3 740.8 L1343 746 Q1342.3 748.3 1340 748.3 H1333.5 Z" fill="url(#cpr)"/>
<rect x="1328" y="749" width="18.1" height="7" rx="2" fill="#f6c80f"/>
<text x="1330.58" y="755.30" font-size="6.00" font-weight="bold" fill="#111" textLength="13.15" lengthAdjust="spacingAndGlyphs">PRE</text>

</svg>
</body></html>
